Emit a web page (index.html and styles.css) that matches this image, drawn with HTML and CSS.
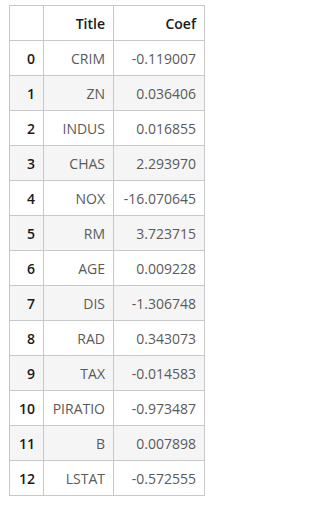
FILE: index.html
```html
<!DOCTYPE html>
<html>
<head>
<meta charset="utf-8">
<link rel="stylesheet" href="styles.css">
</head>
<body>
<table class="df">
  <thead>
    <tr><th class="idx"></th><th>Title</th><th>Coef</th></tr>
  </thead>
  <tbody>
    <tr><th class="idx">0</th><td>CRIM</td><td>-0.119007</td></tr>
    <tr><th class="idx">1</th><td>ZN</td><td>0.036406</td></tr>
    <tr><th class="idx">2</th><td>INDUS</td><td>0.016855</td></tr>
    <tr><th class="idx">3</th><td>CHAS</td><td>2.293970</td></tr>
    <tr><th class="idx">4</th><td>NOX</td><td>-16.070645</td></tr>
    <tr><th class="idx">5</th><td>RM</td><td>3.723715</td></tr>
    <tr><th class="idx">6</th><td>AGE</td><td>0.009228</td></tr>
    <tr><th class="idx">7</th><td>DIS</td><td>-1.306748</td></tr>
    <tr><th class="idx">8</th><td>RAD</td><td>0.343073</td></tr>
    <tr><th class="idx">9</th><td>TAX</td><td>-0.014583</td></tr>
    <tr><th class="idx">10</th><td>PIRATIO</td><td>-0.973487</td></tr>
    <tr><th class="idx">11</th><td>B</td><td>0.007898</td></tr>
    <tr><th class="idx">12</th><td>LSTAT</td><td>-0.572555</td></tr>
  </tbody>
</table>
</body>
</html>
```
FILE: styles.css
```css
html, body {
  margin: 0;
  background: #ffffff;
}
body {
  padding: 5px 0 0 9px;
  font-family: "Open Sans", "Noto Sans", sans-serif;
  font-size: 14px;
}
.df {
  border-collapse: collapse;
  table-layout: fixed;
  width: 195px;
}
.df th, .df td {
  border: 1px solid #c8c8c8;
  height: 35px;
  padding: 0 8px 0 2px;
  text-align: right;
  vertical-align: middle;
  box-sizing: border-box;
  white-space: nowrap;
}
.df th {
  color: #1a1a1a;
  font-weight: 600;
}
.df td {
  color: #5a5a5a;
  font-weight: 400;
}
.df th.idx { width: 34px; }
.df thead th:nth-child(2) { width: 70px; }
.df thead th:nth-child(3) { width: 91px; }
.df tbody tr:nth-child(even) {
  background: #f5f5f5;
}
```
